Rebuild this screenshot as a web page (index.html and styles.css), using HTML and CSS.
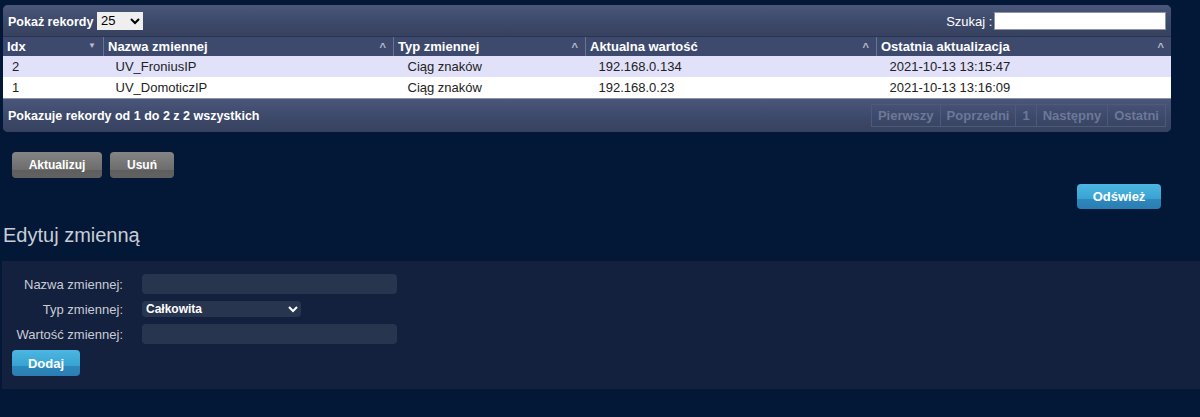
FILE: index.html
```html
<!DOCTYPE html>
<html lang="pl">
<head>
  <meta charset="UTF-8" />
  <meta name="viewport" content="width=device-width, initial-scale=1.0" />
  <title>Zmienne użytkownika</title>
  <link rel="stylesheet" href="styles.css">
</head>
<body>
  <div class="table-wrap">
    <div class="toolbar top">
      <label class="length">Pokaż rekordy
        <select>
          <option>25</option>
          <option>50</option>
          <option>100</option>
        </select>
      </label>
      <label class="search">Szukaj : <input type="text"></label>
    </div>
    <table class="vars">
      <thead>
        <tr>
          <th class="c-idx">Idx <span class="sort">&#9660;</span></th>
          <th class="c-name">Nazwa zmiennej <span class="sort up">^</span></th>
          <th class="c-type">Typ zmiennej <span class="sort up">^</span></th>
          <th class="c-val">Aktualna wartość <span class="sort up">^</span></th>
          <th class="c-date">Ostatnia aktualizacja <span class="sort up">^</span></th>
        </tr>
      </thead>
      <tbody>
        <tr class="odd">
          <td>2</td>
          <td>UV_FroniusIP</td>
          <td>Ciąg znaków</td>
          <td>192.168.0.134</td>
          <td>2021-10-13 13:15:47</td>
        </tr>
        <tr>
          <td>1</td>
          <td>UV_DomoticzIP</td>
          <td>Ciąg znaków</td>
          <td>192.168.0.23</td>
          <td>2021-10-13 13:16:09</td>
        </tr>
      </tbody>
    </table>
    <div class="toolbar bottom">
      <span class="info">Pokazuje rekordy od 1 do 2 z 2 wszystkich</span>
      <div class="pager">
        <a>Pierwszy</a><a>Poprzedni</a><a>1</a><a>Następny</a><a>Ostatni</a>
      </div>
    </div>
  </div>

  <div class="actions">
    <button class="btn gray wide">Aktualizuj</button>
    <button class="btn gray">Usuń</button>
  </div>
  <div class="refresh-row">
    <button class="btn blue">Odśwież</button>
  </div>

  <h2 class="edit-title">Edytuj zmienną</h2>
  <div class="edit-panel">
    <div class="form-row">
      <label>Nazwa zmiennej:</label>
      <input type="text" class="field">
    </div>
    <div class="form-row">
      <label>Typ zmiennej:</label>
      <select class="field small">
        <option>Całkowita</option>
        <option>Zmiennoprzecinkowa</option>
        <option>Ciąg znaków</option>
        <option>Data</option>
        <option>Czas</option>
      </select>
    </div>
    <div class="form-row last">
      <label>Wartość zmiennej:</label>
      <input type="text" class="field">
    </div>
    <button class="btn blue add">Dodaj</button>
  </div>
</body>
</html>
```

FILE: styles.css
```css
body {
  font-family: 'Liberation Sans', Arial, sans-serif;
  margin: 0;
  background: #021836;
  color: #fff;
  font-size: 12px;
  height: 417px;
  overflow: hidden;
}
.table-wrap {
  margin: 5px 29px 0 3px;
  border-radius: 5px;
  overflow: hidden;
  background: #3c4868;
}
.toolbar {
  display: flex;
  justify-content: space-between;
  align-items: center;
  background: linear-gradient(#4b577a, #3e4a6c 50%, #37425f);
}
.toolbar.top {
  height: 31px;
  padding: 0 5px 0 5px;
  border-bottom: 1px solid #2a3350;
}
.length {
  font-weight: bold;
  font-size: 12.5px;
}
.length select {
  font-family: inherit;
  font-size: 13px;
  font-weight: normal;
  height: 18px;
  padding: 0;
  border: none;
  width: 46px;
  margin-left: 0;
}
.search {
  font-size: 13px;
}
.search input {
  width: 172px;
  height: 18px;
  box-sizing: border-box;
  border: 1px solid #8d95a8;
  padding: 0;
  margin-left: -2px;
}
.vars {
  width: 100%;
  border-collapse: collapse;
  font-size: 13px;
}
.vars th {
  background: #3e4a6d;
  text-align: left;
  font-weight: bold;
  height: 19px;
  padding: 0 4px 0 4px;
  border-left: 1px solid #6a7391;
  position: relative;
}
.vars th:first-child {
  border-left: none;
}
.sort {
  position: absolute;
  right: 7px;
  top: 4px;
  font-size: 8px;
  color: #b6bccc;
}
.sort.up {
  font-size: 11px;
  top: 4px;
}
.c-idx { width: 92px; }
.c-name { width: 281px; }
.c-type { width: 183px; }
.c-val { width: 282px; }
.vars td {
  color: #222;
  background: #fff;
  height: 21px;
  padding: 0 0 0 12px;
}
.vars td:first-child { padding-left: 9px; }
.vars td:nth-child(3) { padding-left: 14px; }
.vars td:nth-child(4),
.vars td:nth-child(5) { padding-left: 13px; }
.vars tr.odd td {
  background: #e1e1f9;
}
.toolbar.bottom {
  height: 33px;
  padding: 0 5px;
  border-top: 1px solid #8a92ab;
}
.info {
  font-weight: bold;
  font-size: 12.5px;
}
.pager {
  display: flex;
}
.pager a {
  color: #6d7897;
  font-weight: bold;
  font-size: 13px;
  border: 1px solid #4e5a7a;
  padding: 3px 6px 3px;
  margin-left: -1px;
}
.actions {
  display: flex;
  gap: 8px;
  margin: 20px 0 0 12px;
}
.btn {
  font-family: inherit;
  font-weight: bold;
  font-size: 12px;
  color: #fff;
  border: none;
  border-radius: 4px;
  height: 26px;
  padding: 0;
  cursor: pointer;
}
.btn.gray {
  background: linear-gradient(#858585, #6c6c6c 70%, #5e5e5e 71%, #626262);
  width: 64px;
}
.btn.gray.wide {
  width: 90px;
}
.btn.blue {
  background: linear-gradient(#4db6e2, #38a3d2 60%, #2d88bd 61%, #2a7db2);
  font-size: 13px;
}
.refresh-row {
  display: flex;
  justify-content: flex-end;
  margin: 6px 39px 0 0;
}
.refresh-row .btn {
  width: 84px;
  height: 25px;
}
.edit-title {
  font-weight: normal;
  font-size: 20px;
  color: #c9cdd6;
  margin: 15px 0 0 3px;
}
.edit-panel {
  background: #13203e;
  margin: 14px 0 0 2px;
  padding: 13px 0 13px 10px;
}
.form-row {
  display: flex;
  align-items: center;
  margin-bottom: 7px;
}
.form-row.last {
  margin-bottom: 6px;
}
.form-row label {
  width: 111px;
  text-align: right;
  color: #c9cdd6;
  font-size: 13px;
  margin-right: 19px;
}
.field {
  box-sizing: border-box;
  background: #28354f;
  border: none;
  border-radius: 4px;
  height: 20px;
  width: 255px;
  color: #fff;
  padding: 0 4px;
  font-family: inherit;
}
select.field.small {
  width: 159px;
  height: 16px;
  font-weight: bold;
  font-size: 12px;
  padding: 0;
}
.add {
  width: 68px;
}
```
